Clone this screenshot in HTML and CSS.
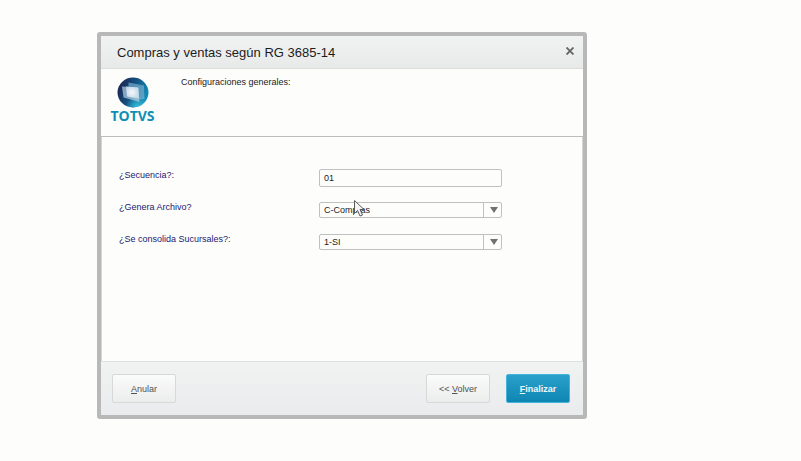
FILE: index.html
```html
<!DOCTYPE html>
<html lang="es">
<head>
  <meta charset="UTF-8">
  <meta name="viewport" content="width=device-width, initial-scale=1.0">
  <title>Compras y ventas según RG 3685-14</title>
  <link rel="stylesheet" href="styles.css">
</head>
<body>
  <form class="dialog" onsubmit="return false">
    <header class="title-bar">
      <h1>Compras y ventas según RG 3685-14</h1>
      <button type="button" class="close-btn" aria-label="Cerrar">
        <svg width="8" height="8" viewBox="0 0 8 8"><path d="M0.5 0.5L7.5 7.5M7.5 0.5L0.5 7.5" stroke="#626465" stroke-width="1.8"/></svg>
      </button>
    </header>

    <div class="intro">
      <div class="logo">
        <svg width="32" height="31" viewBox="0 0 32 31">
          <defs>
            <linearGradient id="globe" x1="0" y1="0.3" x2="1" y2="0.7">
              <stop offset="0" stop-color="#1c2450"/>
              <stop offset="0.45" stop-color="#14507f"/>
              <stop offset="1" stop-color="#1098c2"/>
            </linearGradient>
            <radialGradient id="shine" cx="0.65" cy="1" r="0.4">
              <stop offset="0" stop-color="#39c0dc"/>
              <stop offset="1" stop-color="#39c0dc" stop-opacity="0"/>
            </radialGradient>
            <radialGradient id="screen" cx="0.45" cy="0.5" r="0.6">
              <stop offset="0" stop-color="#ffffff"/>
              <stop offset="1" stop-color="#c3d9e8"/>
            </radialGradient>
          </defs>
          <ellipse cx="16" cy="15.5" rx="15.5" ry="15" fill="url(#globe)"/>
          <ellipse cx="16" cy="15.5" rx="15.5" ry="15" fill="url(#shine)"/>
          <path d="M11.5 5.5L27 8.5L27.5 22L22 22.5L11.5 20Z" fill="#7fb3d3" opacity="0.65"/>
          <path d="M5 9.5L21 10.5L22.500 25L6.500 20.500Z" fill="#b5cfe2" opacity="0.7"/>
          <path d="M9 9.500L21.500 10.500L22 21.500L10 19.500Z" fill="url(#screen)" opacity="0.9"/>
        </svg>
        <span>TOTVS</span>
      </div>
      <p>Configuraciones generales:</p>
    </div>

    <div class="fields">
      <div class="field">
        <label for="secuencia">¿Secuencia?:</label>
        <input type="text" id="secuencia" value="01">
      </div>
      <div class="field">
        <label for="archivo">¿Genera Archivo?</label>
        <div class="select-box">
          <select id="archivo">
            <option>C-Compras</option>
            <option>V-Ventas</option>
          </select>
          <svg class="pointer" width="11" height="17" viewBox="0 0 11 17"><path d="M0.5 0.5V13.5L3.500 10.500L6 16L8.500 15L6 9.500H10Z" fill="#f4f4f4" stroke="#5a5a5a"/></svg>
        </div>
      </div>
      <div class="field">
        <label for="sucursales">¿Se consolida Sucursales?:</label>
        <div class="select-box">
          <select id="sucursales">
            <option>1-SI</option>
            <option>2-NO</option>
          </select>
        </div>
      </div>
    </div>

    <footer class="actions">
      <button type="button" class="btn"><u>A</u>nular</button>
      <button type="button" class="btn back">&lt;&lt; <u>V</u>olver</button>
      <button type="submit" class="btn primary"><u>F</u>inalizar</button>
    </footer>
  </form>
</body>
</html>
```
FILE: styles.css
```css
* {
  box-sizing: border-box;
}

body {
  margin: 0;
  padding: 32px 16px 32px 97px;
  background: #fdfdfc;
  font-family: "Liberation Sans", Arial, sans-serif;
  font-size: 9px;
  color: #222;
}

h1, p {
  margin: 0;
}

/* Ventana */
.dialog {
  max-width: 490px;
  border: 4px solid #b7b8b7;
  border-radius: 3px;
  background: #fdfdfc;
}

.title-bar {
  display: flex;
  align-items: center;
  justify-content: space-between;
  height: 33px;
  padding: 0 9px 3px 16px;
  border-bottom: 1px solid #dcdedd;
  background: linear-gradient(#f1f3f3, #e8eaea);
}

h1 {
  padding-top: 3px;
  font-size: 13px;
  font-weight: normal;
  color: #1c1c1c;
}

.close-btn {
  display: flex;
  padding: 0;
  border: 0;
  background: none;
  cursor: pointer;
}

.intro {
  display: flex;
  gap: 24px;
  height: 68px;
  padding: 8px 8px 0 7px;
  border-bottom: 1px solid #bcbdbd;
}

.logo {
  display: flex;
  flex-direction: column;
  align-items: center;
  width: 49px;
}

.logo span {
  font-family: "Open Sans", sans-serif;
  font-size: 14px;
  font-weight: bold;
  line-height: 16px;
  color: #0e8fb5;
}

/* Campos */
.fields {
  display: flex;
  flex-direction: column;
  gap: 14px;
  min-height: 224px;
  padding: 32px 80px 16px 17px;
  border: solid #d4d5d5;
  border-width: 0 1px;
}

.field {
  display: grid;
  grid-template-columns: 1fr 183px;
  min-height: 18px;
}

.field label {
  line-height: 13px;
  color: #20206e;
}

.field input,
.field select {
  width: 100%;
  height: 16px;
  padding: 0 4px;
  border: 1px solid #bfc0c0;
  border-radius: 2px;
  background: #fdfdfc;
  font: inherit;
  color: #222;
}

.field input {
  height: 18px;
}

.field select {
  display: block;
  appearance: none;
}

.select-box {
  position: relative;
  align-self: center;
}

.select-box::before {
  content: "";
  position: absolute;
  top: 0;
  right: 18px;
  height: 16px;
  border-left: 1px solid #bfc0c0;
}

.select-box::after {
  content: "";
  position: absolute;
  top: 5px;
  right: 4px;
  border: solid transparent;
  border-width: 6px 4px 0;
  border-top-color: #707272;
  pointer-events: none;
}

.pointer {
  position: absolute;
  top: -2px;
  left: 35px;
  pointer-events: none;
}

/* Botones */
.actions {
  display: flex;
  gap: 16px;
  padding: 12px 13px 12px 11px;
  border-top: 1px solid #dfe1e1;
  background: linear-gradient(#f1f3f2, #e9ebed);
}

.btn {
  width: 64px;
  height: 29px;
  padding: 0;
  border: 1px solid #d7d9d9;
  border-radius: 2px;
  background: linear-gradient(#fbfbfb, #ebecec);
  font: inherit;
  color: #505256;
  cursor: pointer;
}

.back {
  margin-left: auto;
}

.primary {
  border-color: #44b4d8;
  background: linear-gradient(#2aa0cb, #0e86b3);
  font-weight: bold;
  color: #eef8fc;
}
```
